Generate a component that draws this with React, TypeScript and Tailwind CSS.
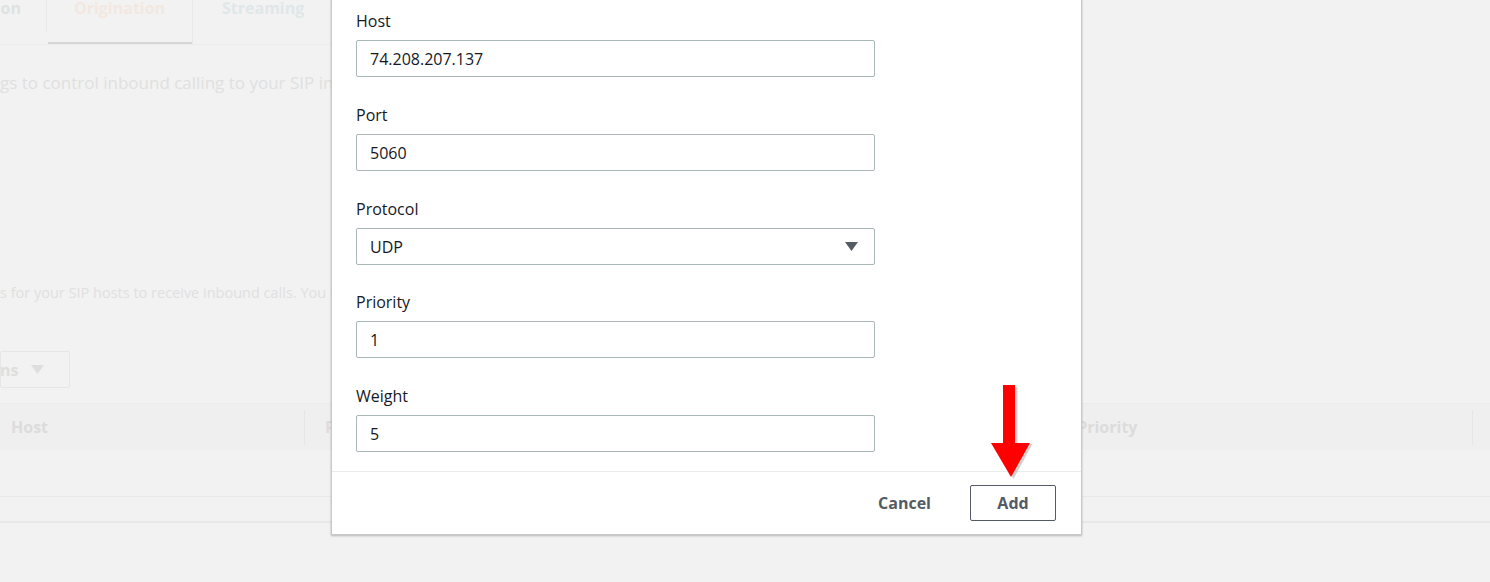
import React from "react";

const font = { fontFamily: '"Open Sans", "Noto Sans", Arial, sans-serif' };

function Field({ label, value, select, mb = "mb-[26px]" }: { label: string; value: string; select?: boolean; mb?: string }) {
  return (
    <div className={mb}>
      <div className="h-[24px] leading-[24px] text-[16px] text-[#16191f] mb-[7px]">{label}</div>
      <div className="h-[37px] w-[519px] border border-[#aab7b8] rounded-[2px] flex items-center justify-between pl-[13px] pr-[16px] text-[16px] text-[#16191f] bg-white">
        <span>{value}</span>
        {select && (
          <svg width="13" height="9" viewBox="0 0 13 9">
            <path d="M0 0 H13 L6.5 9 Z" fill="#545b64" />
          </svg>
        )}
      </div>
    </div>
  );
}

export default function App() {
  return (
    <div className="relative w-[1490px] h-[582px] overflow-hidden bg-[#f2f2f2]" style={font}>
      {/* background page (dimmed) */}
      <div className="flex flex-col">
        {/* tabs */}
        <div className="h-[45px] flex items-start border-b border-[#ececec] w-[340px]">
          <div className="h-[32px] flex items-start pr-[25px] border-r border-[#e8e8e8] ml-[-78px]">
            <span className="text-[16px] font-bold text-[#dde2e3] leading-[16px]">Termination</span>
          </div>
          <div className="relative h-[45px] w-[146px] border-r border-[#e8e8e8] flex justify-center">
            <span className="text-[16px] font-bold text-[#f3e8e0] leading-[16px]">Origination</span>
            <div className="absolute left-[1px] right-0 top-[42px] h-[2px] bg-[#d6d6d6]" />
          </div>
          <div className="h-[32px] pl-[29px] flex items-start">
            <span className="text-[16px] font-bold text-[#dfe7e9] leading-[16px]">Streaming</span>
          </div>
        </div>
        <div className="mt-[26px] text-[17px] leading-[24px] text-[#e0e0e0] whitespace-nowrap">
          gs to control inbound calling to your SIP infrastructure.
        </div>
        <div className="mt-[187px] text-[14.5px] leading-[22px] text-[#e0e0e0] whitespace-nowrap">
          s for your SIP hosts to receive inbound calls. You can add up to 10 entries.
        </div>
        <div className="mt-[47px] h-[37px] w-[70px] border border-[#e6e6e6] rounded-[2px] flex items-center text-[16px] font-bold text-[#dedede]">
          <span className="ml-[-1px]">ns</span>
          <svg className="ml-[13px]" width="13" height="9" viewBox="0 0 13 9">
            <path d="M0 0 H13 L6.5 9 Z" fill="#dedede" />
          </svg>
        </div>
        <div className="mt-[15px] h-[47px] flex items-center bg-[#efefef] border-t border-[#ebebeb] text-[16px] font-bold text-[#dcdcdc]">
          <div className="w-[305px] pl-[11px] h-[35px] flex items-center border-r border-[#e6e6e6]">Host</div>
          <div className="pl-[20px]">Port</div>
          <div className="ml-[718px] w-[396px] h-[35px] flex items-center border-r border-[#e6e6e6]">Priority</div>
        </div>
        <div className="h-[47px] border-b border-[#e8e8e8]" />
        <div className="h-[26px] border-b-2 border-[#e8e8e8]" />
      </div>

      {/* modal */}
      <div className="absolute left-[331px] top-[-1px] w-[751px] bg-white border border-[#c8c8c8] shadow-[0_1px_2px_rgba(0,0,0,0.25)]">
        <div className="pl-[24px] pt-[9px]">
          <Field label="Host" value="74.208.207.137" />
          <Field label="Port" value="5060" />
          <Field label="Protocol" value="UDP" select mb="mb-[25px]" />
          <Field label="Priority" value="1" />
          <div>
            <div className="h-[24px] leading-[24px] text-[16px] text-[#16191f] mb-[7px]">Weight</div>
            <div className="h-[37px] w-[519px] border border-[#aab7b8] rounded-[2px] flex items-center pl-[13px] text-[16px] text-[#16191f]">
              5
            </div>
          </div>
        </div>
        <div className="mt-[19px] border-t border-[#eaeded] h-[63px] flex items-center justify-end pr-[25px]">
          <span className="text-[16px] font-bold text-[#545b64] mr-[39px]">Cancel</span>
          <div className="h-[36px] w-[86px] border border-[#545b64] rounded-[2px] flex items-center justify-center text-[16px] font-bold text-[#545b64]">
            Add
          </div>
        </div>
      </div>

      {/* red arrow annotation */}
      <svg className="absolute left-[988px] top-[383px]" width="46" height="98" viewBox="0 0 46 98">
        <path d="M16 3 H28 V60 H43 L24 95 L4 60 H16 Z" fill="rgba(0,0,0,0.18)" transform="translate(1.5,1)" />
        <path d="M15 2 H27 V60 H42 L23 94 L3 60 H15 Z" fill="#ff0000" />
      </svg>
    </div>
  );
}
